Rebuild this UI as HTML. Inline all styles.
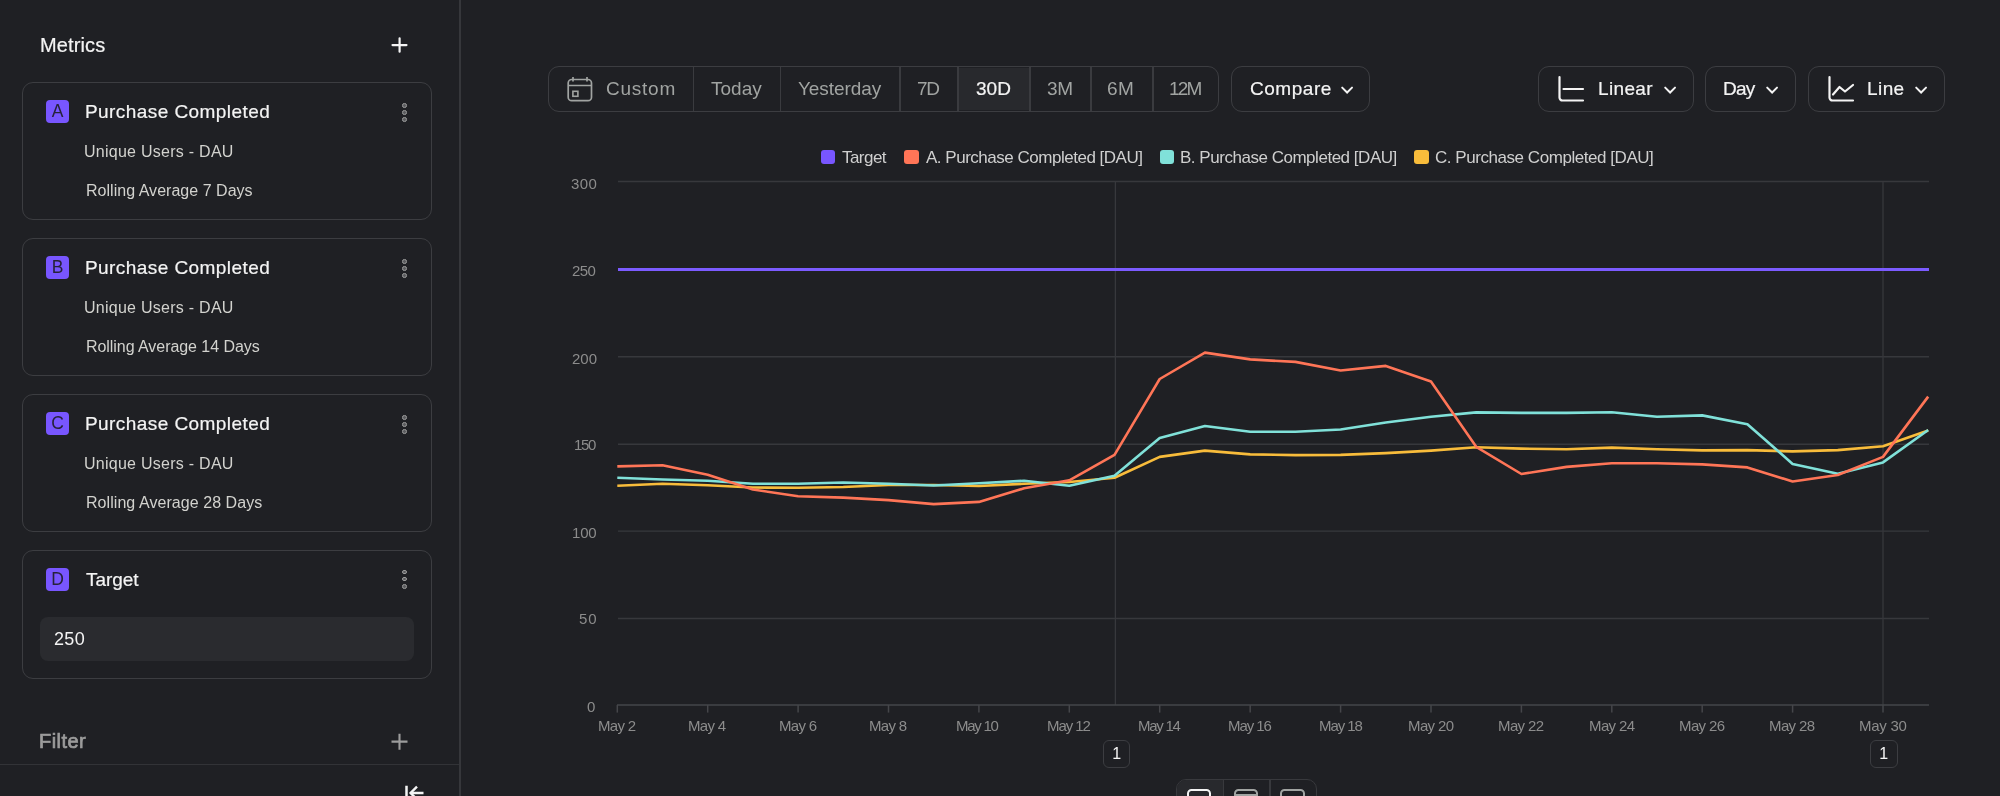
<!DOCTYPE html>
<html><head><meta charset="utf-8">
<style>
*{margin:0;padding:0;box-sizing:border-box}
html,body{width:2000px;height:796px;overflow:hidden;background:#1f2024;font-family:"Liberation Sans",sans-serif}
.a{position:absolute}
.t{position:absolute;white-space:nowrap;will-change:transform}
.card{position:absolute;left:22px;width:409.5px;border:1.5px solid #3c3d41;border-radius:11px}
.badge{position:absolute;left:46px;width:23px;height:23px;border-radius:4px;background:#7856ff}
.kb{position:absolute;left:402.2px;width:4.6px;height:4.6px;border-radius:50%;border:1.5px solid #9d9d9d;background:#5a5b5e}
.btn{position:absolute;top:66.2px;height:45.6px;border:1.6px solid #3c3d41;border-radius:11px}
.dv{position:absolute;top:67px;width:1.5px;height:44px;background:#3a3b3f}
.sq{position:absolute;width:14.5px;height:14px;border-radius:3px;top:150px}
.chev{position:absolute;top:84px}
</style></head><body>

<div class="a" style="left:459px;top:0;width:2px;height:796px;background:#36373b"></div>
<div class="a" style="left:0;top:764px;width:459px;height:1px;background:#323337"></div>
<svg class="a" style="left:389px;top:35px" width="21" height="21"><path d="M10.6 3.3v13.4M3.5 10.1h14" stroke="#f4f4f4" stroke-width="2.2" stroke-linecap="round"/></svg>
<svg class="a" style="left:389px;top:731px" width="21" height="21"><path d="M10.5 2.7v16M2.5 10.6h16" stroke="#9c9c9c" stroke-width="2.1"/></svg>
<div class="card" style="top:82px;height:138px"></div>
<div class="card" style="top:237.6px;height:138px"></div>
<div class="card" style="top:393.6px;height:138.2px"></div>
<div class="card" style="top:549.8px;height:128.8px"></div>
<div class="badge" style="top:100px"></div>
<div class="kb" style="top:103.1px"></div>
<div class="kb" style="top:110.2px"></div>
<div class="kb" style="top:117.3px"></div>
<div class="badge" style="top:256px"></div>
<div class="kb" style="top:259.1px"></div>
<div class="kb" style="top:266.2px"></div>
<div class="kb" style="top:273.3px"></div>
<div class="badge" style="top:412px"></div>
<div class="kb" style="top:415.1px"></div>
<div class="kb" style="top:422.2px"></div>
<div class="kb" style="top:429.3px"></div>
<div class="badge" style="top:567.5px"></div>
<div class="kb" style="top:569.8px"></div>
<div class="kb" style="top:576.9px"></div>
<div class="kb" style="top:584.0px"></div>
<div class="t" style="left:46px;top:100.3px;width:23px;text-align:center;font-size:17.5px;line-height:23px;color:#26223a;font-weight:normal">A</div>
<div class="t" style="left:46px;top:256.3px;width:23px;text-align:center;font-size:17.5px;line-height:23px;color:#26223a;font-weight:normal">B</div>
<div class="t" style="left:46px;top:412.3px;width:23px;text-align:center;font-size:17.5px;line-height:23px;color:#26223a;font-weight:normal">C</div>
<div class="t" style="left:46px;top:567.8px;width:23px;text-align:center;font-size:17.5px;line-height:23px;color:#26223a;font-weight:normal">D</div>
<div class="a" style="left:40px;top:616.5px;width:373.5px;height:44px;background:#2a2b2f;border-radius:8px"></div>
<svg class="a" style="left:400px;top:780px" width="30" height="16" fill="none" stroke="#f4f4f4" stroke-width="2.5"><path d="M6.5 5.8v12M11 13h12.5"/><path d="M17 6.6l-6.4 6.4 6.4 6.4" stroke-width="2.4"/></svg>
<div class="a" style="left:958px;top:68px;width:71.5px;height:42px;background:#28292d"></div>
<div class="btn" style="left:547.5px;width:671.5px"></div>
<div class="dv" style="left:692.5px"></div>
<div class="dv" style="left:779.5px"></div>
<div class="dv" style="left:899px"></div>
<div class="dv" style="left:957px"></div>
<div class="dv" style="left:1029px"></div>
<div class="dv" style="left:1090px"></div>
<div class="dv" style="left:1152px"></div>
<svg class="a" style="left:566px;top:76px" width="27" height="27" fill="none" stroke="#a1a4a2" stroke-width="1.7"><rect x="2.2" y="3.5" width="23.3" height="21.2" rx="3.5"/><path d="M2.2 9.5h23.3M7 1v4.5M21 1v4.5"/><rect x="6.9" y="15.3" width="5" height="5" stroke-width="1.6"/></svg>
<div class="btn" style="left:1230.6px;width:139.2px"></div>
<div class="btn" style="left:1538px;width:155.5px"></div>
<div class="btn" style="left:1705px;width:90.5px"></div>
<div class="btn" style="left:1807.5px;width:137px"></div>
<svg class="chev" style="left:1338.5px" width="16" height="12" fill="none" stroke="#f4f4f4" stroke-width="2" stroke-linecap="round"><path d="M3.2 3.6l4.9 4.9 4.9-4.9"/></svg>
<svg class="chev" style="left:1661.5px" width="16" height="12" fill="none" stroke="#f4f4f4" stroke-width="2" stroke-linecap="round"><path d="M3.2 3.6l4.9 4.9 4.9-4.9"/></svg>
<svg class="chev" style="left:1763.5px" width="16" height="12" fill="none" stroke="#f4f4f4" stroke-width="2" stroke-linecap="round"><path d="M3.2 3.6l4.9 4.9 4.9-4.9"/></svg>
<svg class="chev" style="left:1912.5px" width="16" height="12" fill="none" stroke="#f4f4f4" stroke-width="2" stroke-linecap="round"><path d="M3.2 3.6l4.9 4.9 4.9-4.9"/></svg>
<svg class="a" style="left:1555px;top:74px" width="32" height="30" fill="none" stroke="#f4f4f4" stroke-width="2.2" stroke-linecap="round"><path d="M4.5 3v20.5a3 3 0 0 0 3 3h20.5M8.5 15h19.5"/></svg>
<svg class="a" style="left:1825px;top:74px" width="32" height="30" fill="none" stroke="#f4f4f4" stroke-width="2.2" stroke-linecap="round" stroke-linejoin="round"><path d="M4.5 3v20.5a3 3 0 0 0 3 3h20.5M8 20.5l6.5-7.5 5.5 4.5 8-6.5"/></svg>
<div class="sq" style="left:820.75px;background:#7856ff"></div>
<div class="sq" style="left:904.25px;background:#ff7557"></div>
<div class="sq" style="left:1159.75px;background:#80e1d9"></div>
<div class="sq" style="left:1414.25px;background:#f8bc3b"></div>
<svg class="a" style="left:0;top:0" width="2000" height="796">
<line x1="618" x2="1929" y1="181.50" y2="181.50" stroke="#37383c" stroke-width="1.4"/>
<line x1="618" x2="1929" y1="269.20" y2="269.20" stroke="#37383c" stroke-width="1.4"/>
<line x1="618" x2="1929" y1="356.80" y2="356.80" stroke="#37383c" stroke-width="1.4"/>
<line x1="618" x2="1929" y1="444.20" y2="444.20" stroke="#37383c" stroke-width="1.4"/>
<line x1="618" x2="1929" y1="531.10" y2="531.10" stroke="#37383c" stroke-width="1.4"/>
<line x1="618" x2="1929" y1="618.50" y2="618.50" stroke="#37383c" stroke-width="1.4"/>
<line x1="1115.4" x2="1115.4" y1="182" y2="705" stroke="#37383c" stroke-width="1.3"/>
<line x1="1883" x2="1883" y1="182" y2="705" stroke="#37383c" stroke-width="1.3"/>
<line x1="617" x2="1929" y1="705" y2="705" stroke="#45464a" stroke-width="1.5"/>
<line x1="617.3" x2="617.3" y1="705" y2="712.6" stroke="#45464a" stroke-width="1.5"/>
<line x1="707.7" x2="707.7" y1="705" y2="712.6" stroke="#45464a" stroke-width="1.5"/>
<line x1="798.1" x2="798.1" y1="705" y2="712.6" stroke="#45464a" stroke-width="1.5"/>
<line x1="888.5" x2="888.5" y1="705" y2="712.6" stroke="#45464a" stroke-width="1.5"/>
<line x1="978.9" x2="978.9" y1="705" y2="712.6" stroke="#45464a" stroke-width="1.5"/>
<line x1="1069.3" x2="1069.3" y1="705" y2="712.6" stroke="#45464a" stroke-width="1.5"/>
<line x1="1159.7" x2="1159.7" y1="705" y2="712.6" stroke="#45464a" stroke-width="1.5"/>
<line x1="1250.2" x2="1250.2" y1="705" y2="712.6" stroke="#45464a" stroke-width="1.5"/>
<line x1="1340.6" x2="1340.6" y1="705" y2="712.6" stroke="#45464a" stroke-width="1.5"/>
<line x1="1431.0" x2="1431.0" y1="705" y2="712.6" stroke="#45464a" stroke-width="1.5"/>
<line x1="1521.4" x2="1521.4" y1="705" y2="712.6" stroke="#45464a" stroke-width="1.5"/>
<line x1="1611.8" x2="1611.8" y1="705" y2="712.6" stroke="#45464a" stroke-width="1.5"/>
<line x1="1702.2" x2="1702.2" y1="705" y2="712.6" stroke="#45464a" stroke-width="1.5"/>
<line x1="1792.6" x2="1792.6" y1="705" y2="712.6" stroke="#45464a" stroke-width="1.5"/>
<line x1="1883.0" x2="1883.0" y1="705" y2="712.6" stroke="#45464a" stroke-width="1.5"/>
<line x1="618" x2="1929" y1="269.5" y2="269.5" stroke="#7b5bff" stroke-width="3.1"/>
<polyline fill="none" stroke="#f8bc3b" stroke-width="2.6" stroke-linejoin="round" points="617.3,485.8 662.5,483.8 707.7,485.3 752.9,487.5 798.1,487.8 843.3,487.0 888.5,485.0 933.7,485.0 978.9,486.0 1024.1,483.8 1069.3,482.0 1114.5,477.7 1159.7,456.9 1204.9,450.6 1250.2,454.4 1295.4,455.1 1340.6,454.9 1385.8,453.1 1431.0,450.6 1476.2,447.3 1521.4,448.6 1566.6,449.3 1611.8,447.6 1657.0,449.3 1702.2,450.4 1747.4,450.1 1792.6,451.4 1837.8,450.1 1883.0,446.3 1928.2,430.5"/>
<polyline fill="none" stroke="#80e1d9" stroke-width="2.6" stroke-linejoin="round" points="617.3,477.7 662.5,479.5 707.7,480.8 752.9,483.8 798.1,483.8 843.3,482.5 888.5,483.8 933.7,485.5 978.9,483.2 1024.1,480.8 1069.3,485.8 1114.5,475.7 1159.7,438.0 1204.9,426.0 1250.2,431.8 1295.4,431.8 1340.6,429.5 1385.8,422.5 1431.0,416.7 1476.2,412.4 1521.4,412.9 1566.6,412.9 1611.8,412.2 1657.0,416.7 1702.2,415.4 1747.4,424.2 1792.6,463.9 1837.8,473.7 1883.0,462.4 1928.2,430.0"/>
<polyline fill="none" stroke="#ff7557" stroke-width="2.6" stroke-linejoin="round" points="617.3,466.4 662.5,465.2 707.7,474.7 752.9,489.5 798.1,496.3 843.3,497.6 888.5,500.1 933.7,504.1 978.9,501.9 1024.1,488.3 1069.3,480.3 1114.5,454.9 1159.7,379.0 1204.9,352.6 1250.2,359.4 1295.4,361.9 1340.6,370.5 1385.8,365.9 1431.0,381.5 1476.2,446.8 1521.4,474.0 1566.6,466.9 1611.8,463.2 1657.0,463.2 1702.2,464.4 1747.4,467.4 1792.6,481.5 1837.8,475.0 1883.0,456.9 1928.2,396.6"/>
</svg>
<div class="a" style="left:1102.5px;top:740px;width:27.5px;height:27.5px;border:1.5px solid #3c3d41;border-radius:6px;background:#1f2024"></div>
<div class="t" style="left:1102.5px;top:745.5px;width:27.5px;text-align:center;font-size:16px;line-height:16px;color:#f4f4f4">1</div>
<div class="a" style="left:1870px;top:740px;width:27.5px;height:27.5px;border:1.5px solid #3c3d41;border-radius:6px;background:#1f2024"></div>
<div class="t" style="left:1870px;top:745.5px;width:27.5px;text-align:center;font-size:16px;line-height:16px;color:#f4f4f4">1</div>
<div class="a" style="left:1176px;top:779.4px;width:140.5px;height:40px;border:1.5px solid #38393d;border-radius:10px;overflow:hidden">
<div class="a" style="left:0;top:0;width:46px;height:40px;background:#28292d"></div>
<div class="a" style="left:45.5px;top:0;width:1.5px;height:40px;background:#38393d"></div>
<div class="a" style="left:92px;top:0;width:1.5px;height:40px;background:#38393d"></div>
<div class="a" style="left:9.5px;top:8.6px;width:24.5px;height:20px;border:2.3px solid #f4f4f4;border-radius:4.5px"></div>
<div class="a" style="left:56.5px;top:8.6px;width:24.5px;height:20px;border:2.3px solid #a1a4a2;border-radius:4.5px"></div>
<div class="a" style="left:56.5px;top:13.5px;width:24.5px;height:2.2px;background:#a1a4a2"></div>
<div class="a" style="left:103px;top:8.6px;width:24.5px;height:20px;border:2.3px solid #a1a4a2;border-radius:4.5px"></div>
</div>
<div class="t" id="t0" style="left:39.50px;top:34.81px;font-size:20px;line-height:20px;color:#f4f4f4;letter-spacing:0.120px;-webkit-text-stroke:0.2px currentColor;">Metrics</div>
<div class="t" id="t1" style="left:84.58px;top:102.21px;font-size:19px;line-height:19px;color:#f4f4f4;letter-spacing:0.433px;-webkit-text-stroke:0.2px currentColor;">Purchase Completed</div>
<div class="t" id="t2" style="left:84.00px;top:144.01px;font-size:16px;line-height:16px;color:#d2d2ce;letter-spacing:0.264px;">Unique Users - DAU</div>
<div class="t" id="t3" style="left:86.16px;top:183.41px;font-size:16px;line-height:16px;color:#d2d2ce;letter-spacing:0.028px;">Rolling Average 7 Days</div>
<div class="t" id="t4" style="left:84.58px;top:258.21px;font-size:19px;line-height:19px;color:#f4f4f4;letter-spacing:0.433px;-webkit-text-stroke:0.2px currentColor;">Purchase Completed</div>
<div class="t" id="t5" style="left:84.00px;top:300.01px;font-size:16px;line-height:16px;color:#d2d2ce;letter-spacing:0.264px;">Unique Users - DAU</div>
<div class="t" id="t6" style="left:86.16px;top:339.41px;font-size:16px;line-height:16px;color:#d2d2ce;letter-spacing:-0.055px;">Rolling Average 14 Days</div>
<div class="t" id="t7" style="left:84.58px;top:414.21px;font-size:19px;line-height:19px;color:#f4f4f4;letter-spacing:0.433px;-webkit-text-stroke:0.2px currentColor;">Purchase Completed</div>
<div class="t" id="t8" style="left:84.00px;top:456.01px;font-size:16px;line-height:16px;color:#d2d2ce;letter-spacing:0.264px;">Unique Users - DAU</div>
<div class="t" id="t9" style="left:86.16px;top:495.41px;font-size:16px;line-height:16px;color:#d2d2ce;letter-spacing:0.059px;">Rolling Average 28 Days</div>
<div class="t" id="t10" style="left:86.06px;top:569.61px;font-size:19px;line-height:19px;color:#f4f4f4;letter-spacing:-0.072px;-webkit-text-stroke:0.2px currentColor;">Target</div>
<div class="t" id="t11" style="left:53.98px;top:630.41px;font-size:18px;line-height:18px;color:#f4f4f4;letter-spacing:0.360px;">250</div>
<div class="t" id="t12" style="left:39.00px;top:731.21px;font-size:20px;line-height:20px;color:#9c9c9c;letter-spacing:0.432px;-webkit-text-stroke:0.7px currentColor;">Filter</div>
<div class="t" id="t13" style="left:606.34px;top:79.21px;font-size:19px;line-height:19px;color:#a1a4a2;letter-spacing:0.756px;">Custom</div>
<div class="t" id="t14" style="left:710.90px;top:79.21px;font-size:19px;line-height:19px;color:#a1a4a2;letter-spacing:0.000px;">Today</div>
<div class="t" id="t15" style="left:797.90px;top:79.21px;font-size:19px;line-height:19px;color:#a1a4a2;letter-spacing:-0.071px;">Yesterday</div>
<div class="t" id="t16" style="left:916.66px;top:79.21px;font-size:19px;line-height:19px;color:#a1a4a2;letter-spacing:-1.260px;">7D</div>
<div class="t" id="t17" style="left:975.90px;top:79.21px;font-size:19px;line-height:19px;color:#f4f4f4;letter-spacing:0.000px;-webkit-text-stroke:0.2px currentColor;">30D</div>
<div class="t" id="t18" style="left:1046.50px;top:79.21px;font-size:19px;line-height:19px;color:#a1a4a2;letter-spacing:-0.360px;">3M</div>
<div class="t" id="t19" style="left:1107.34px;top:79.21px;font-size:19px;line-height:19px;color:#a1a4a2;letter-spacing:0.360px;">6M</div>
<div class="t" id="t20" style="left:1169.00px;top:79.21px;font-size:19px;line-height:19px;color:#a1a4a2;letter-spacing:-1.800px;">12M</div>
<div class="t" id="t21" style="left:1249.56px;top:79.21px;font-size:19px;line-height:19px;color:#f4f4f4;letter-spacing:0.540px;-webkit-text-stroke:0.2px currentColor;">Compare</div>
<div class="t" id="t22" style="left:1598.00px;top:79.21px;font-size:19px;line-height:19px;color:#f4f4f4;letter-spacing:0.360px;-webkit-text-stroke:0.2px currentColor;">Linear</div>
<div class="t" id="t23" style="left:1723.00px;top:79.21px;font-size:19px;line-height:19px;color:#f4f4f4;letter-spacing:-0.720px;-webkit-text-stroke:0.2px currentColor;">Day</div>
<div class="t" id="t24" style="left:1867.34px;top:79.21px;font-size:19px;line-height:19px;color:#f4f4f4;letter-spacing:0.420px;-webkit-text-stroke:0.2px currentColor;">Line</div>
<div class="t" id="t25" style="left:842.40px;top:149.00px;font-size:17px;line-height:17px;color:#cfcfcf;letter-spacing:-0.540px;">Target</div>
<div class="t" id="t26" style="left:925.66px;top:149.00px;font-size:17px;line-height:17px;color:#cfcfcf;letter-spacing:-0.485px;">A. Purchase Completed [DAU]</div>
<div class="t" id="t27" style="left:1180.34px;top:149.00px;font-size:17px;line-height:17px;color:#cfcfcf;letter-spacing:-0.473px;">B. Purchase Completed [DAU]</div>
<div class="t" id="t28" style="left:1435.42px;top:149.00px;font-size:17px;line-height:17px;color:#cfcfcf;letter-spacing:-0.450px;">C. Purchase Completed [DAU]</div>
<div class="t" id="t29" style="left:571.06px;top:176.40px;font-size:15px;line-height:15px;color:#8c8c8c;letter-spacing:0.450px;">300</div>
<div class="t" id="t30" style="left:572.32px;top:262.50px;font-size:15px;line-height:15px;color:#8c8c8c;letter-spacing:-0.630px;">250</div>
<div class="t" id="t31" style="left:571.56px;top:350.60px;font-size:15px;line-height:15px;color:#8c8c8c;letter-spacing:0.000px;">200</div>
<div class="t" id="t32" style="left:574.16px;top:436.60px;font-size:15px;line-height:15px;color:#8c8c8c;letter-spacing:-1.350px;">150</div>
<div class="t" id="t33" style="left:571.92px;top:524.60px;font-size:15px;line-height:15px;color:#8c8c8c;letter-spacing:-0.180px;">100</div>
<div class="t" id="t34" style="left:579.16px;top:611.00px;font-size:15px;line-height:15px;color:#8c8c8c;letter-spacing:0.900px;">50</div>
<div class="t" id="t35" style="left:587.32px;top:698.60px;font-size:15px;line-height:15px;color:#8c8c8c;letter-spacing:0.000px;">0</div>
<div class="t" id="t36" style="left:598.37px;top:718.21px;font-size:15px;line-height:15px;color:#8c8c8c;letter-spacing:-0.676px;">May 2</div>
<div class="t" id="t37" style="left:688.14px;top:718.21px;font-size:15px;line-height:15px;color:#8c8c8c;letter-spacing:-0.678px;">May 4</div>
<div class="t" id="t38" style="left:778.80px;top:718.21px;font-size:15px;line-height:15px;color:#8c8c8c;letter-spacing:-0.676px;">May 6</div>
<div class="t" id="t39" style="left:869.39px;top:718.21px;font-size:15px;line-height:15px;color:#8c8c8c;letter-spacing:-0.676px;">May 8</div>
<div class="t" id="t40" style="left:956.45px;top:718.21px;font-size:15px;line-height:15px;color:#8c8c8c;letter-spacing:-1.260px;">May 10</div>
<div class="t" id="t41" style="left:1047.04px;top:718.21px;font-size:15px;line-height:15px;color:#8c8c8c;letter-spacing:-1.080px;">May 12</div>
<div class="t" id="t42" style="left:1137.70px;top:718.21px;font-size:15px;line-height:15px;color:#8c8c8c;letter-spacing:-1.260px;">May 14</div>
<div class="t" id="t43" style="left:1228.37px;top:718.21px;font-size:15px;line-height:15px;color:#8c8c8c;letter-spacing:-1.080px;">May 16</div>
<div class="t" id="t44" style="left:1318.96px;top:718.21px;font-size:15px;line-height:15px;color:#8c8c8c;letter-spacing:-1.080px;">May 18</div>
<div class="t" id="t45" style="left:1407.51px;top:718.21px;font-size:15px;line-height:15px;color:#8c8c8c;letter-spacing:-0.612px;">May 20</div>
<div class="t" id="t46" style="left:1498.18px;top:718.21px;font-size:15px;line-height:15px;color:#8c8c8c;letter-spacing:-0.612px;">May 22</div>
<div class="t" id="t47" style="left:1588.85px;top:718.21px;font-size:15px;line-height:15px;color:#8c8c8c;letter-spacing:-0.612px;">May 24</div>
<div class="t" id="t48" style="left:1678.54px;top:718.21px;font-size:15px;line-height:15px;color:#8c8c8c;letter-spacing:-0.612px;">May 26</div>
<div class="t" id="t49" style="left:1769.20px;top:718.21px;font-size:15px;line-height:15px;color:#8c8c8c;letter-spacing:-0.612px;">May 28</div>
<div class="t" id="t50" style="left:1858.87px;top:718.21px;font-size:15px;line-height:15px;color:#8c8c8c;letter-spacing:-0.252px;">May 30</div>
</body></html>
